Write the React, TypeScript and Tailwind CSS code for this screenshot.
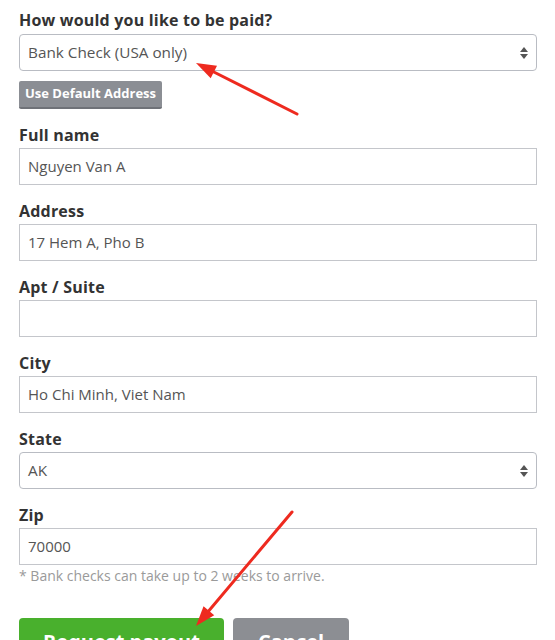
import React from 'react'

const font = { fontFamily: '"Open Sans", "Liberation Sans", sans-serif' }

function Label({ children }: { children: React.ReactNode }) {
  return <label className="block h-[22px] text-[16px] font-bold leading-[22px] tracking-[0.2px] text-[#333]">{children}</label>
}

function TextField({ label, value }: { label: string; value: string }) {
  return (
    <div className="mt-[15px]">
      <Label>{label}</Label>
      <div className="mt-[2px] flex h-[37px] items-center border border-[#c4c6cb] bg-white px-[8px] text-[15px] text-[#555]">
        {value}
      </div>
    </div>
  )
}

function Arrows() {
  return (
    <svg width="14" height="17" viewBox="0 0 14 17" className="block">
      <path d="M7 3L11 8H3z" fill="#555" />
      <path d="M7 15L11 10H3z" fill="#555" />
    </svg>
  )
}

function SelectBox({ value }: { value: string }) {
  return (
    <div className="flex h-[37px] items-center justify-between rounded-[4px] border border-[#b9bcc3] bg-white pl-[8px] pr-[5px] text-[15.3px] text-[#555]">
      <span>{value}</span>
      <Arrows />
    </div>
  )
}

function RedArrow({ x1, y1, x2, y2 }: { x1: number; y1: number; x2: number; y2: number }) {
  const ang = Math.atan2(y2 - y1, x2 - x1)
  const len = 20
  const w = 7
  const bx = x2 - len * Math.cos(ang)
  const by = y2 - len * Math.sin(ang)
  const px = -Math.sin(ang) * w
  const py = Math.cos(ang) * w
  return (
    <g>
      <line x1={x1} y1={y1} x2={bx} y2={by} stroke="#ee2a1f" strokeWidth="3" strokeLinecap="round" />
      <polygon points={`${x2},${y2} ${bx + px},${by + py} ${bx - px},${by - py}`} fill="#ee2a1f" />
    </g>
  )
}

export default function App() {
  return (
    <div className="relative h-[640px] w-[555px] overflow-hidden bg-white pl-[19px] pr-[18px]" style={font}>
      <div className="pt-[9px]">
        <Label>How would you like to be paid?</Label>
        <div className="mt-[3px]">
          <SelectBox value="Bank Check (USA only)" />
        </div>
        <button className="mt-[10px] h-[28px] rounded-[2px] border-b-2 border-[#6f7278] bg-[#8b8e94] px-[6px] text-[13px] font-bold text-white">
          Use Default Address
        </button>
      </div>
      <TextField label="Full name" value="Nguyen Van A" />
      <TextField label="Address" value="17 Hem A, Pho B" />
      <TextField label="Apt / Suite" value="" />
      <TextField label="City" value="Ho Chi Minh, Viet Nam" />
      <div className="mt-[15px]">
        <Label>State</Label>
        <div className="mt-[2px]">
          <SelectBox value="AK" />
        </div>
      </div>
      <TextField label="Zip" value="70000" />
      <p className="mt-[2px] text-[14px] leading-[18px] text-[#9a9a9a]">* Bank checks can take up to 2 weeks to arrive.</p>
      <div className="mt-[33px] flex gap-[9px]">
        <button className="h-[44px] w-[205px] rounded-[4px] bg-[#49b02d] pt-[4px] text-[20px] font-bold leading-[28px] text-white">Request payout</button>
        <button className="h-[44px] w-[116px] rounded-[4px] bg-[#8c8e93] pt-[4px] text-[20px] font-bold leading-[28px] text-white">Cancel</button>
      </div>
      <svg className="pointer-events-none absolute left-0 top-0" width="555" height="640">
        <RedArrow x1={297} y1={114} x2={196} y2={63} />
        <RedArrow x1={292} y1={512} x2={196} y2={626} />
      </svg>
    </div>
  )
}
